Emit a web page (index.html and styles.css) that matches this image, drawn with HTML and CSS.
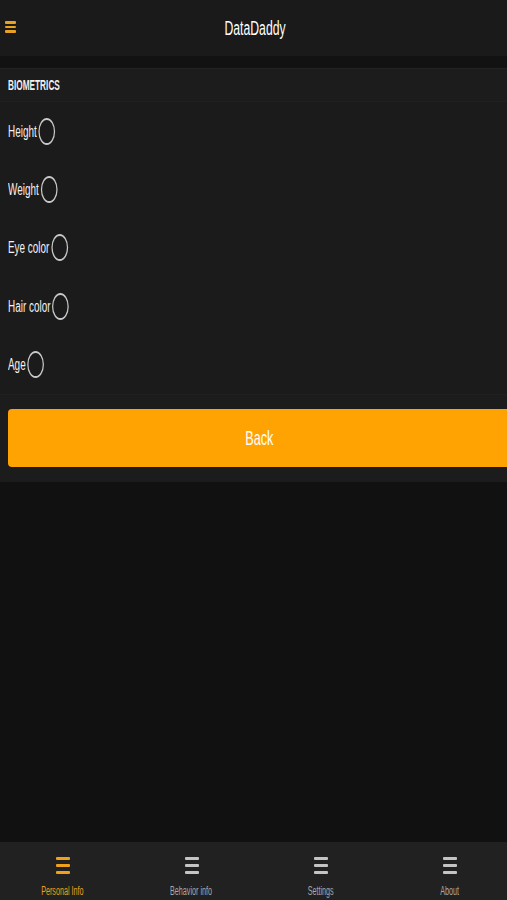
FILE: index.html
```html
<!DOCTYPE html>
<html>
<head>
<meta charset="utf-8">
<link rel="stylesheet" href="styles.css">
</head>
<body>
<div class="app">
  <header class="topbar">
    <span class="menu-btn"><i></i><i></i><i></i></span>
    <h1 class="title">DataDaddy</h1>
  </header>
  <div class="spacer"></div>
  <div class="section-head"><span class="squeeze">BIOMETRICS</span></div>
  <ul class="list">
    <li class="row"><span class="row-inner"><span class="label">Height</span><span class="radio"></span></span></li>
    <li class="row"><span class="row-inner"><span class="label">Weight</span><span class="radio"></span></span></li>
    <li class="row"><span class="row-inner"><span class="label">Eye color</span><span class="radio"></span></span></li>
    <li class="row"><span class="row-inner"><span class="label">Hair color</span><span class="radio"></span></span></li>
    <li class="row"><span class="row-inner"><span class="label">Age</span><span class="radio"></span></span></li>
  </ul>
  <div class="actions">
    <button class="back-btn"><span class="btn-text">Back</span></button>
  </div>
  <main class="empty"></main>
  <nav class="tabbar">
    <div class="tab active"><span class="tab-icon"><i></i><i></i><i></i></span><span class="tab-label">Personal Info</span></div>
    <div class="tab"><span class="tab-icon"><i></i><i></i><i></i></span><span class="tab-label">Behavior info</span></div>
    <div class="tab"><span class="tab-icon"><i></i><i></i><i></i></span><span class="tab-label">Settings</span></div>
    <div class="tab"><span class="tab-icon"><i></i><i></i><i></i></span><span class="tab-label">About</span></div>
  </nav>
</div>
</body>
</html>
```

FILE: styles.css
```css
* { box-sizing: border-box; }
html, body {
  margin: 0;
  padding: 0;
  background: #111111;
  overflow: hidden;
}
body {
  font-family: "Liberation Sans", Arial, sans-serif;
  color: #eeeeee;
}
.app {
  width: 507px;
  height: 900px;
  display: flex;
  flex-direction: column;
  overflow: hidden;
}
.topbar {
  height: 56px;
  background: #1a1a1a;
  display: flex;
  align-items: center;
  justify-content: center;
  position: relative;
}
.menu-btn {
  position: absolute;
  left: 5px;
  top: 21px;
  width: 11px;
  display: flex;
  flex-direction: column;
  gap: 2px;
}
.menu-btn i {
  display: block;
  height: 2.5px;
  background: #e9a21f;
  border-radius: 1px;
}
.title {
  margin: 0 0 0 3px;
  font-size: 20px;
  font-weight: normal;
  color: #ffffff;
  transform: scaleX(0.61);
}
.spacer {
  height: 12px;
  background: #121212;
}
.section-head {
  height: 33px;
  background: #1c1c1c;
  border-top: 1px solid #222;
  display: flex;
  align-items: center;
  padding-left: 8px;
  font-size: 14px;
  font-weight: bold;
  color: #f0f0f0;
}
.squeeze {
  display: inline-block;
  transform: scaleX(0.59);
  transform-origin: left center;
}
.list {
  list-style: none;
  margin: 0;
  padding: 0;
  background: #1b1b1b;
  border-top: 1px solid #202020;
  border-bottom: 1px solid #202020;
}
.row {
  height: 58.4px;
  display: flex;
  align-items: center;
  padding-left: 8px;
}
.row-inner {
  display: inline-flex;
  align-items: center;
  gap: 3px;
  transform: scaleX(0.62);
  transform-origin: left center;
}
.label {
  font-size: 16px;
  color: #f2f2f2;
  line-height: 1;
  padding-top: 1px;
}
.radio {
  width: 27px;
  height: 27px;
  border: 2.4px solid #c8c8c8;
  border-radius: 50%;
}
.actions {
  background: #1c1c1c;
  padding: 14px 0 15px 8px;
}
.back-btn {
  display: flex;
  align-items: center;
  justify-content: center;
  width: 503px;
  height: 58px;
  border: none;
  border-radius: 4px;
  background: #ffa303;
  color: #ffffff;
  font-family: "Liberation Sans", Arial, sans-serif;
  font-size: 21px;
  padding: 0;
}
.btn-text {
  display: inline-block;
  transform: scaleX(0.6);
}
.empty {
  flex: 1;
  background: #111111;
}
.tabbar {
  height: 58px;
  background: #212121;
  display: flex;
  margin-left: -2px;
}
.tab {
  flex: 0 0 129px;
  display: flex;
  flex-direction: column;
  align-items: center;
  padding-top: 15px;
}
.tab-icon {
  width: 14px;
  display: flex;
  flex-direction: column;
  gap: 4px;
}
.tab-icon i {
  display: block;
  height: 3px;
  background: #c4c4c4;
  border-radius: 1px;
}
.tab-label {
  display: inline-block;
  margin-top: 10px;
  font-size: 12px;
  line-height: 14px;
  color: #a8a8a8;
  transform: scaleX(0.6);
  white-space: nowrap;
}
.tab.active .tab-icon i { background: #f0a01a; }
.tab.active .tab-label { color: #e9a01e; }
```
